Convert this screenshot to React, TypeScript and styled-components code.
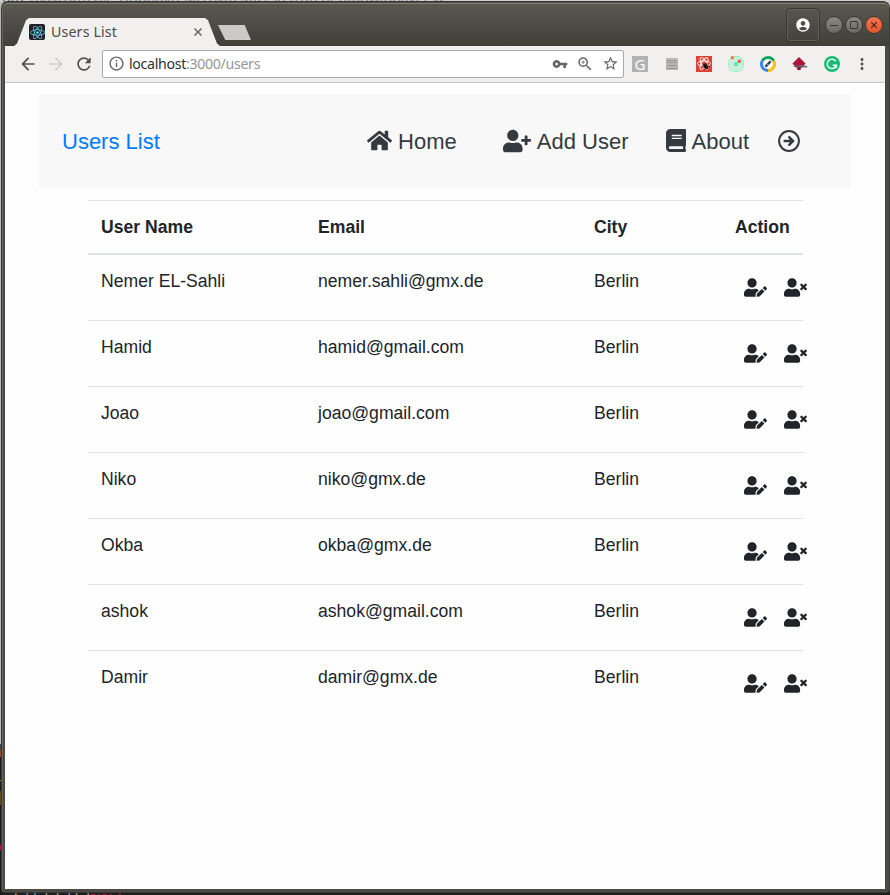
import React from 'react';
import styled, { createGlobalStyle } from 'styled-components';
import { FaHome, FaUserPlus, FaBook, FaUserEdit, FaUserTimes, FaReact } from 'react-icons/fa';
import {
  MdArrowBack, MdArrowForward, MdRefresh, MdInfoOutline, MdVpnKey, MdZoomIn, MdStarBorder, MdMoreVert, MdAccountCircle,
} from 'react-icons/md';

const GlobalStyle = createGlobalStyle`
  * { box-sizing: border-box; }
  body { margin: 0; overflow: hidden; }
  svg { display: block; flex: none; }
`;

const Desktop = styled.div`
  position: relative;
  width: 890px;
  height: 895px;
  padding: 2px 1px 3px 2px;
  overflow: hidden;
  background: linear-gradient(#d0cdcb 0 2px, #b9b9bd 2px 744px, #1d1d1b 744px);
`;

const BackgroundText = styled.div<{ $left: number; $top: number; $color: string }>`
  position: absolute;
  left: ${(p) => p.$left}px;
  top: ${(p) => p.$top}px;
  font: 14px/16px 'Noto Sans', sans-serif;
  color: ${(p) => p.$color};
  white-space: nowrap;
`;

const BackgroundMark = styled.i<{ $top: number; $height: number; $color: string }>`
  position: absolute;
  left: 0;
  top: ${(p) => p.$top}px;
  width: 2px;
  height: ${(p) => p.$height}px;
  background: ${(p) => p.$color};
`;

const Window = styled.div`
  position: relative;
  display: flex;
  flex-direction: column;
  height: 890px;
  padding: 1px 4px 3px 2px;
  background: #4b4a44;
  border-top: 1px solid #4a4a46;
  border-left: 1px solid #65645d;
  border-radius: 6px 6px 3px 3px;
  box-shadow: 0 0 0 1px #3a3a36;
`;

const TitleBar = styled.div`
  display: flex;
  align-items: flex-start;
  height: 43px;
  flex: none;
  margin: -1px -4px 0 -2px;
  padding: 0 6px 0 11px;
  border-top: 1px solid #85847c;
  border-radius: 5px 5px 0 0;
  background: linear-gradient(#5b5850, #403f3a);
`;

const Tab = styled.div`
  display: flex;
  align-items: center;
  width: 206px;
  height: 28px;
  margin-top: 14px;
  padding: 0 18px 0 15px;
  background: #f1f0ef;
  clip-path: polygon(0 100%, 3px 91%, 12px 8%, 15px 0, 191px 0, 194px 8%, 203px 91%, 206px 100%);
`;

const Favicon = styled.span`
  display: grid;
  place-items: center;
  width: 16px;
  height: 16px;
  border-radius: 2px;
  background: #222;
  color: #61dafb;
  font-size: 15px;
`;

const TabTitle = styled.span`
  flex: 1;
  margin-left: 6px;
  font: 14.2px/20px 'Noto Sans', sans-serif;
  letter-spacing: 0.15px;
  color: #4c4c4c;
`;

const NewTab = styled.span`
  width: 33px;
  height: 15px;
  margin: 21px 0 0 -2px;
  background: #cbcac8;
  clip-path: polygon(0 0, 81% 0, 100% 100%, 22% 100%);
`;

const Profile = styled.span`
  display: grid;
  place-items: center;
  width: 34px;
  height: 34px;
  margin: 4px 5px 0 auto;
  border: 1px solid #37352f;
  border-radius: 4px;
  box-shadow: inset 0 0 0 1px #615f58;
  color: #fff;
`;

const WindowControls = styled.span`
  display: flex;
  gap: 2px;
  margin-top: 12px;
`;

const Control = styled.span<{ $close?: boolean }>`
  display: grid;
  place-items: center;
  width: 18px;
  height: 18px;
  border: 1px solid #383731;
  border-radius: 50%;
  background: ${(p) => (p.$close ? 'linear-gradient(#f27350, #e2542b)' : 'linear-gradient(#8a8982, #696861)')};
`;

const Toolbar = styled.div`
  display: flex;
  align-items: center;
  flex: none;
  height: 37px;
  padding: 0 14px 1px 13px;
  background: #f1f0ef;
  border-bottom: 1px solid #c9c8c7;
  color: #505050;
`;

const NavButtons = styled.div`
  display: flex;
  align-items: center;
  gap: 8px;
  width: 83px;
`;

const AddressBar = styled.div`
  display: flex;
  align-items: center;
  width: 522px;
  height: 28px;
  margin-left: 1px;
  padding: 0 4px 0 5px;
  background: #fff;
  border: 1px solid #aaa9ad;
  border-radius: 2px;
  color: #666;
`;

const Url = styled.span`
  flex: 1;
  margin-left: 4px;
  font: 14.2px/22px 'Noto Sans', sans-serif;
  letter-spacing: -0.33px;
  color: #969696;
  b { font-weight: 400; color: #303030; }
`;

const AddressIcons = styled.span`
  display: flex;
  align-items: center;
  gap: 8px;
`;

const Extensions = styled.div`
  display: flex;
  align-items: center;
  gap: 16px;
  margin-left: 8px;
`;

const Square = styled.span<{ $bg: string }>`
  display: grid;
  place-items: center;
  width: 16px;
  height: 16px;
  background: ${(p) => p.$bg};
  color: #fff;
  font: 15px/16px 'Noto Sans', sans-serif;
`;

const MoreButton = styled.span`
  margin-left: auto;
`;

const Page = styled.main`
  flex: 1;
  background: #fefefe;
  padding: 11px 34px 0;
  font-family: 'Liberation Sans', Arial, sans-serif;
  color: #212529;
`;

const Navbar = styled.nav`
  display: flex;
  align-items: center;
  height: 95px;
  width: 812px;
  padding: 0 51px 0 23px;
  background: #f8f8f8;
  font-size: 22px;
  line-height: 33px;
`;

const Brand = styled.a`
  color: #007bff;
  margin-right: auto;
`;

const NavItem = styled.a<{ $gap?: number }>`
  display: flex;
  align-items: center;
  margin-left: ${(p) => p.$gap ?? 0}px;
  color: #343a40;
  svg { margin: -2px 6px 0 0; }
`;

const BookIcon = styled(FaBook)`
  width: 20px;
  height: 23px;
`;

const ExitLink = styled.a`
  margin: -2px 0 0 29px;
  color: #343a40;
`;

const Table = styled.div`
  width: 715px;
  margin: 11px 0 0 49px;
  font-size: 17.6px;
  line-height: 26.4px;
`;

const Row = styled.div`
  display: grid;
  grid-template-columns: 217px 276px 141px 81px;
  height: 66px;
  padding: 13px 0 0 13px;
  border-top: 1px solid #dee2e6;
`;

const HeadRow = styled(Row)`
  height: 55px;
  border-bottom: 2px solid #dee2e6;
  font-weight: 700;
  & + ${Row} { border-top: 0; height: 65px; }
`;

const Actions = styled.span`
  display: flex;
  gap: 17px;
  padding: 8px 0 0 9px;
`;

const users = [
  ['Nemer EL-Sahli', 'nemer.sahli@gmx.de'],
  ['Hamid', 'hamid@gmail.com'],
  ['Joao', 'joao@gmail.com'],
  ['Niko', 'niko@gmx.de'],
  ['Okba', 'okba@gmx.de'],
  ['ashok', 'ashok@gmail.com'],
  ['Damir', 'damir@gmx.de'],
];

const ArrowCircle = () => (
  <svg width="22" height="22" viewBox="0 0 22 22" fill="none" stroke="currentColor">
    <circle cx="11" cy="11" r="9.9" strokeWidth="2" />
    <path d="M5.6 11h8" strokeWidth="2.4" />
    <path d="M11.2 7.1 15.3 11l-4.1 3.9" strokeWidth="2.3" strokeLinejoin="round" strokeLinecap="round" />
    <path fill="currentColor" stroke="none" d="M11.5 7.5v7l3.8-3.5z" />
  </svg>
);

const NoteIcon = () => (
  <svg width="16" height="16" viewBox="0 0 16 16">
    <path fill="#b8b8b8" d="M2 2h12v10H2zM2 13h12v1H2z" />
    <path stroke="#999" d="M3 4.5h9M3 6.5h10M3 9.5h10M2 12.5h12" />
  </svg>
);

const ReactBugIcon = () => (
  <svg width="16" height="16" viewBox="0 0 16 16" fill="none">
    <g stroke="#fff" strokeWidth=".9">
      <ellipse cx="8" cy="7.5" rx="6.5" ry="2.6" />
      <ellipse cx="8" cy="7.5" rx="6.5" ry="2.6" transform="rotate(60 8 7.5)" />
      <ellipse cx="8" cy="7.5" rx="6.5" ry="2.6" transform="rotate(120 8 7.5)" />
    </g>
    <g transform="rotate(-35 9.5 10)">
      <ellipse cx="9.5" cy="10.5" rx="2" ry="3.1" fill="#24120f" />
      <path stroke="#24120f" strokeWidth=".7" d="m6.5 8 6 5M12.5 8l-6 5M6.3 10.5h6.5" />
    </g>
  </svg>
);

const OrbitIcon = () => (
  <svg width="16" height="16" viewBox="0 0 16 16" fill="none">
    <circle cx="8" cy="8" r="7.4" stroke="#7ff0bd" strokeWidth="1.1" />
    <circle cx="8" cy="8" r="4.7" stroke="#7ff0bd" />
    <circle cx="8" cy="8" r="2.6" fill="#68eda7" />
    <circle cx="4.3" cy="1.8" r="1.7" fill="#fa7041" />
    <circle cx="11.3" cy="5.2" r="1.7" fill="#f35436" />
  </svg>
);

const ColorRingIcon = () => (
  <svg width="16" height="16" viewBox="0 0 16 16" fill="none">
    <circle cx="8" cy="8" r="6" fill="#fff" />
    <g strokeWidth="3">
      <path stroke="#16a45d" d="M2.4 4.7A6.5 6.5 0 0 1 13.6 4.7" />
      <path stroke="#fbbd16" d="M13.6 4.7A6.5 6.5 0 0 1 8 14.5" />
      <path stroke="#3886f4" d="M8 14.5A6.5 6.5 0 0 1 2.4 4.7" />
    </g>
    <path stroke="#303b3b" strokeWidth="2.2" d="m5.4 10.6 5.2-5.2" />
    <path stroke="#fff" strokeWidth=".6" d="m7 7.8 1.2 1.2" />
  </svg>
);

const DiamondIcon = () => (
  <svg width="16" height="16" viewBox="0 0 16 16">
    <path fill="#ae153b" d="m7 1 6.5 6.6L7 14.4.5 7.6z" />
    <path fill="#68606a" d="M2 9.8 10 9l5.2 1.2v1.2L2 11z" />
    <path fill="#851330" d="m5 14 2-3 2 3z" />
  </svg>
);

const GrammarIcon = () => (
  <svg width="16" height="16" viewBox="0 0 16 16" fill="none">
    <circle cx="8" cy="8" r="8" fill="#15bd74" />
    <path stroke="#fff" strokeWidth="1.5" d="M11.8 5.2a4.7 4.7 0 1 0 .6 4.1H8.7M12.3 8.9v3" />
  </svg>
);

export default function App() {
  return (
    <>
      <GlobalStyle />
      <Desktop>
        <BackgroundText $left={2} $top={-10} $color="#666">om</BackgroundText>
        <BackgroundText $left={30} $top={-10} $color="#87868a">maxroto2bit=Dupbox/EMrz8x02MRTSt/Trutl br amdwibbaver w</BackgroundText>
        <BackgroundMark $top={744} $height={6} $color="#444" />
        <BackgroundMark $top={750} $height={7} $color="#9c4a1b" />
        <BackgroundMark $top={780} $height={1} $color="#c98729" />
        <BackgroundMark $top={791} $height={14} $color="#6a4a16" />
        <BackgroundMark $top={845} $height={5} $color="#bd1450" />
        <BackgroundText $left={12} $top={889} $color="#aeb7bd">{'| || | | || |'}</BackgroundText>
        <BackgroundText $left={89} $top={889} $color="#c21e58">a:a: |</BackgroundText>
        <Window>
          <TitleBar>
            <Tab>
              <Favicon><FaReact /></Favicon>
              <TabTitle>Users List</TabTitle>
              <svg width="8" height="8" viewBox="0 0 8 8" stroke="#666" strokeWidth="1.5"><path d="m.5.5 7 7m0-7-7 7" /></svg>
            </Tab>
            <NewTab />
            <Profile><MdAccountCircle size={16} /></Profile>
            <WindowControls>
              <Control><svg width="8" height="8" stroke="#393832"><path d="M0 4.5h8" /></svg></Control>
              <Control><svg width="8" height="8" fill="none" stroke="#393832"><path d="M.5.5h7v7h-7z" /></svg></Control>
              <Control $close><svg width="6" height="6" stroke="#4d2518" strokeWidth="1.2"><path d="m0 0 6 6m0-6-6 6" /></svg></Control>
            </WindowControls>
          </TitleBar>
          <Toolbar>
            <NavButtons>
              <MdArrowBack size={20} />
              <MdArrowForward size={20} color="#cfcecd" />
              <MdRefresh size={20} />
            </NavButtons>
            <AddressBar>
              <MdInfoOutline size={17} />
              <Url><b>localhost</b>:3000/users</Url>
              <AddressIcons>
                <MdVpnKey size={16} />
                <MdZoomIn size={18} />
                <MdStarBorder size={17} />
              </AddressIcons>
            </AddressBar>
            <Extensions>
              <Square $bg="#b2b2b2">G</Square>
              <NoteIcon />
              <Square $bg="#df4037"><ReactBugIcon /></Square>
              <OrbitIcon />
              <ColorRingIcon />
              <DiamondIcon />
              <GrammarIcon />
            </Extensions>
            <MoreButton><MdMoreVert size={18} /></MoreButton>
          </Toolbar>
          <Page>
            <Navbar>
              <Brand>Users List</Brand>
              <NavItem><FaHome size={25} />Home</NavItem>
              <NavItem $gap={46}><FaUserPlus size={28} />Add User</NavItem>
              <NavItem $gap={37}><BookIcon />About</NavItem>
              <ExitLink><ArrowCircle /></ExitLink>
            </Navbar>
            <Table>
              <HeadRow>
                <span>User Name</span><span>Email</span><span>City</span><span>Action</span>
              </HeadRow>
              {users.map(([name, email]) => (
                <Row key={name}>
                  <span>{name}</span><span>{email}</span><span>Berlin</span>
                  <Actions><FaUserEdit size={23} /><FaUserTimes size={23} /></Actions>
                </Row>
              ))}
            </Table>
          </Page>
        </Window>
      </Desktop>
    </>
  );
}
